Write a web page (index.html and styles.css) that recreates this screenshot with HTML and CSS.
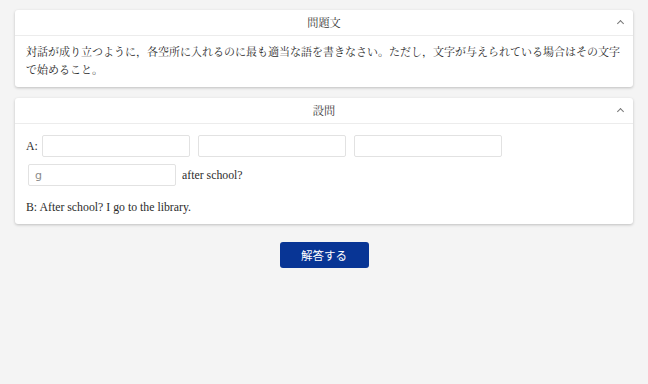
FILE: index.html
```html
<!DOCTYPE html>
<html lang="ja">
<head>
    <meta charset="UTF-8">
    <meta name="viewport" content="width=device-width, initial-scale=1.0">
    <title>問題</title>
    <link rel="stylesheet" href="styles.css">
</head>
<body>
    <section class="panel">
        <div class="panel-head">
            <h2>問題文</h2>
            <span class="chevron"></span>
        </div>
        <div class="panel-body intro">
            <p>対話が成り立つように，各空所に入れるのに最も適当な語を書きなさい。ただし，文字が与えられている場合はその文字で始めること。</p>
        </div>
    </section>

    <section class="panel">
        <div class="panel-head">
            <h2>設問</h2>
            <span class="chevron"></span>
        </div>
        <div class="panel-body question">
            <div class="blank-line">
                <span class="speaker">A:</span>
                <input type="text" class="blank">
                <input type="text" class="blank">
                <input type="text" class="blank">
                <input type="text" class="blank" placeholder="g">
                <span>after school?</span>
            </div>
            <p class="reply">B: After school? I go to the library.</p>
        </div>
    </section>

    <div class="actions">
        <button class="submit">解答する</button>
    </div>
</body>
</html>
```

FILE: styles.css
```css
:root {
    --navy: #083595;
    --text: #2b2b2b;
    --line: #ececec;
    --shadow: 0 1px 3px rgba(0, 0, 0, 0.22);
}

* {
    margin: 0;
    padding: 0;
    box-sizing: border-box;
}

body {
    background-color: #f4f4f4;
    color: var(--text);
    font-family: "Liberation Serif", "Noto Serif CJK JP", "Noto Sans CJK JP", serif;
    font-size: 11.8px;
    line-height: 18px;
    padding: 10px 15px;
}

.panel {
    background: white;
    border-radius: 3px;
    box-shadow: var(--shadow);
    margin-bottom: 11px;
}

.panel-head {
    position: relative;
    height: 26px;
    display: flex;
    align-items: center;
    justify-content: center;
    border-bottom: 1px solid var(--line);
}

.panel-head h2 {
    font-size: 11.2px;
    font-weight: normal;
    color: #333;
}

.chevron {
    position: absolute;
    right: 10px;
    top: 11px;
    width: 5px;
    height: 5px;
    border-top: 1.5px solid #777;
    border-left: 1.5px solid #777;
    transform: rotate(45deg);
}

.panel-body {
    padding: 7px 11px 8px;
}

.intro p {
    font-size: 11px;
    line-break: anywhere;
}

.question {
    padding: 11px 11px 8px;
}

.blank-line {
    display: flex;
    flex-wrap: wrap;
    align-items: center;
    gap: 7px 4px;
}

.speaker {
    margin-right: -2px;
}

.blank {
    width: 148px;
    height: 22px;
    margin: 0 2px;
    padding: 0 6px;
    border: 1px solid #e2e2e2;
    border-radius: 2px;
    font-family: "DejaVu Sans", sans-serif;
    font-size: 11px;
    color: #333;
    outline: none;
}

.blank::placeholder {
    color: #8a8a8a;
}

.reply {
    margin-top: 12px;
}

.actions {
    display: flex;
    justify-content: center;
    padding-top: 7px;
}

.submit {
    width: 89px;
    height: 26px;
    border: none;
    border-radius: 3px;
    background: var(--navy);
    color: white;
    font-family: "Noto Sans CJK JP", sans-serif;
    font-size: 11.5px;
    cursor: pointer;
}
```
